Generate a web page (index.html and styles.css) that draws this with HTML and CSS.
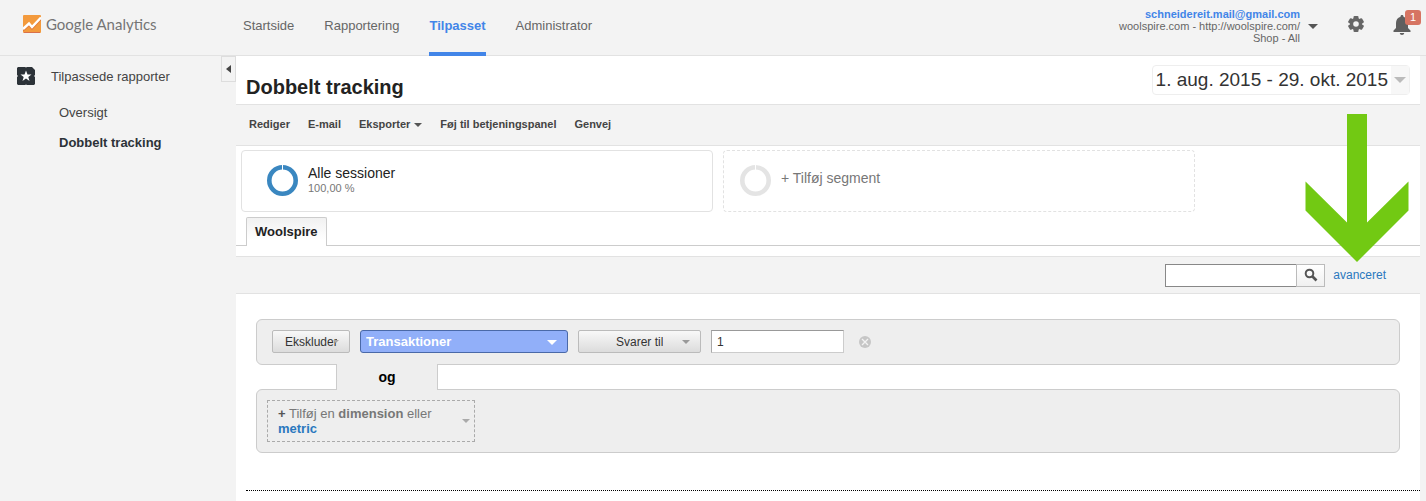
FILE: index.html
```html
<!DOCTYPE html>
<html lang="da">
<head>
	<meta charset="utf-8">
	<title>Dobbelt tracking - Google Analytics</title>
	<link rel="stylesheet" href="styles.css">
</head>
<body>
	<header class="header">
		<a class="logo" href="#">
			<svg width="18" height="18" viewBox="0 0 18 18">
				<rect width="18" height="18" rx="1" fill="#f39a3d"/>
				<path d="M1 17.500h16" stroke="#d9704a"/>
				<path d="M0 15.500l6-5.500 3 3.500L18 4" fill="none" stroke="#e07a3c" stroke-width="2"/>
				<path d="M0 14l6-5.500 3 3.500 9-9.500" fill="none" stroke="#fff" stroke-width="2.400"/>
			</svg>
			<span>Google Analytics</span>
		</a>
		<nav class="nav">
			<a href="#">Startside</a>
			<a href="#">Rapportering</a>
			<a href="#" class="active">Tilpasset</a>
			<a href="#">Administrator</a>
		</nav>
		<button class="account" type="button">
			<span class="account-text">
				<b>schneidereit.mail@gmail.com</b>
				<span>woolspire.com - http://woolspire.com/</span>
				<span>Shop - All</span>
			</span>
			<span class="caret caret-big"></span>
		</button>
		<button class="icon-btn" type="button" aria-label="Indstillinger">
			<svg width="16" height="16" viewBox="0 0 16 16">
				<g fill="#666">
					<rect x="5.500" y="0" width="5" height="16" rx="1"/>
					<rect x="5.500" y="0" width="5" height="16" rx="1" transform="rotate(60 8 8)"/>
					<rect x="5.500" y="0" width="5" height="16" rx="1" transform="rotate(120 8 8)"/>
					<circle cx="8" cy="8" r="6.200"/>
				</g>
				<circle cx="8" cy="8" r="2.800" fill="#f3f3f3"/>
			</svg>
		</button>
		<button class="icon-btn bell" type="button" aria-label="Meddelelser">
			<svg width="18" height="20" viewBox="0 0 18 20">
				<path d="M9 0c1 0 1.500.7 1.500 1.700C13.500 2.500 15 5 15 8v5l2.500 2.500V17H.5v-1.500L3 13V8c0-3 1.500-5.500 4.500-6.300C7.500.7 8 0 9 0zM6.800 18h4.400c0 1.200-1 2-2.200 2s-2.200-.8-2.200-2z" fill="#5f5f5f"/>
			</svg>
			<span class="badge">1</span>
		</button>
	</header>

	<div class="page">
		<aside class="sidebar">
			<a class="side-head" href="#">
				<svg width="18" height="18" viewBox="0 0 18 18">
					<path d="M1 0h7.500l.5 1 .5-1H15l3 3v5l-1 1 1 1v7l-1 1H9.500L9 17l-.5 1H1l-1-1v-7l1-1-1-1V1z" fill="#2c3238"/>
					<path d="M9 3.500l1.500 4h4l-3.200 2.400 1.200 4L9 11.500 5.500 13.900l1.200-4L3.500 7.500h4z" fill="#fff"/>
				</svg>
				<span>Tilpassede rapporter</span>
			</a>
			<a class="side-item" href="#">Oversigt</a>
			<a class="side-item active" href="#">Dobbelt tracking</a>
			<button class="collapse" type="button" aria-label="Skjul menu">
				<svg width="5" height="8" viewBox="0 0 5 8"><path d="M5 0v8L0 4z" fill="#444"/></svg>
			</button>
		</aside>

		<main class="main">
			<div class="title-row">
				<h1>Dobbelt tracking</h1>
				<button class="date" type="button">
					<span class="date-text">1. aug. 2015 - 29. okt. 2015</span>
					<span class="date-arrow"><span class="caret caret-date"></span></span>
				</button>
			</div>

			<div class="toolbar">
				<button type="button">Rediger</button>
				<button type="button">E-mail</button>
				<button type="button">Eksporter<span class="caret"></span></button>
				<button type="button">Føj til betjeningspanel</button>
				<button type="button">Genvej</button>
			</div>

			<div class="segments">
				<button class="segment" type="button">
					<svg width="32" height="32" viewBox="0 0 32 32">
						<circle cx="16.500" cy="16.500" r="13.200" fill="none" stroke="#3a87c0" stroke-width="4.600"/>
						<path d="M16.500 0v6" stroke="#fff"/>
					</svg>
					<span class="segment-text">
						<span class="segment-name">Alle sessioner</span>
						<span class="segment-pct">100,00 %</span>
					</span>
				</button>
				<button class="segment segment-add" type="button">
					<svg width="32" height="32" viewBox="0 0 32 32">
						<circle cx="16.500" cy="16.500" r="13.200" fill="none" stroke="#e4e4e4" stroke-width="4.600"/>
						<path d="M16.500 0v6" stroke="#fff"/>
					</svg>
					<span class="segment-text">+ Tilføj segment</span>
				</button>
			</div>

			<div class="tabs">
				<button class="tab" type="button">Woolspire</button>
			</div>

			<form class="search-row">
				<input class="search" type="text" aria-label="Søg">
				<button class="search-btn" type="button" aria-label="Søg">
					<svg width="14" height="14" viewBox="0 0 14 14">
						<circle cx="5.500" cy="5.500" r="3.800" fill="none" stroke="#555" stroke-width="2"/>
						<path d="M8.500 8.500l4 4" stroke="#555" stroke-width="2.600"/>
					</svg>
				</button>
				<a href="#">avanceret</a>
			</form>

			<form class="filter">
				<div class="panel">
					<span class="select select-mode">
						<select aria-label="Type"><option>Ekskluder</option><option>Medtag</option></select>
					</span>
					<span class="select select-metric">
						<select aria-label="Metric"><option>Transaktioner</option></select>
					</span>
					<span class="select select-match">
						<select aria-label="Betingelse"><option>Svarer til</option></select>
					</span>
					<input class="value" type="text" value="1" aria-label="Værdi">
					<button class="remove" type="button" aria-label="Fjern">
						<svg width="12" height="12" viewBox="0 0 12 12">
							<circle cx="6" cy="6" r="6" fill="#c6c6c6"/>
							<path d="M3 3l6 6M9 3L3 9" stroke="#f3f3f3" stroke-width="1.300"/>
						</svg>
					</button>
				</div>
				<div class="and">og</div>
				<div class="panel panel-add">
					<button class="add" type="button">
						<span><b class="plus">+</b> Tilføj en <b>dimension</b> eller <b class="metric">metric</b></span>
						<span class="caret caret-grey"></span>
					</button>
				</div>
			</form>

			<hr class="dots">

			<!-- arrow pointing at "avanceret" -->
			<svg class="pointer" width="104" height="148" viewBox="0 0 104 148">
				<path d="M42 0h20v108.500l41.500-41v29L52 148 .5 96.500v-29l41.500 41z" fill="#72c913"/>
			</svg>
		</main>
	</div>
</body>
</html>
```

FILE: styles.css
```css
* {
	box-sizing: border-box;
}
body {
	margin: 0;
	min-height: 100vh;
	display: flex;
	flex-direction: column;
	background: #f3f3f3;
	color: #222;
	font-family: "Liberation Sans", Arial, sans-serif;
	font-size: 13px;
}
a {
	color: inherit;
	text-decoration: none;
}
button {
	margin: 0;
	padding: 0;
	border: 0;
	background: none;
	color: inherit;
	font: inherit;
	text-align: left;
	cursor: pointer;
}
svg {
	display: block;
	flex: none;
}

/* little down arrows */
.caret {
	display: inline-block;
	border: 4px solid transparent;
	border-top-color: #555;
	border-bottom: 0;
}
.caret-big {
	border-width: 5px 5px 0;
}
.caret-date {
	border-width: 6px 6px 0;
	border-top-color: #bbb;
}
.caret-grey {
	border-top-color: #aaa;
}

/* header */
.header {
	display: flex;
	height: 56px;
	padding: 0 5px 0 23px;
	border-bottom: 1px solid #e2e2e2;
}
.logo {
	display: flex;
	gap: 5px;
	width: 220px;
	padding-top: 15px;
	color: #757575;
	font-family: Lato, sans-serif;
	font-size: 15px;
	line-height: 18px;
}
.nav {
	display: flex;
	gap: 30px;
	height: 56px;
	color: #666;
	line-height: 52px;
}
.nav a {
	border-bottom: 4px solid transparent;
}
.nav .active {
	border-color: #4285e8;
	color: #4285e8;
	font-weight: bold;
}
.account {
	display: flex;
	align-items: center;
	align-self: flex-start;
	gap: 8px;
	margin-left: auto;
	margin-right: 30px;
	padding-top: 8px;
	color: #666;
	font-size: 11px;
	line-height: 12px;
	text-align: right;
}
.account-text {
	display: flex;
	flex-direction: column;
}
.account-text b {
	color: #4285e8;
}
.icon-btn {
	display: flex;
	align-self: flex-start;
	padding-top: 16px;
}
.bell {
	position: relative;
	width: 28px;
	margin-left: 29px;
	padding-top: 15px;
}
.badge {
	position: absolute;
	top: 10px;
	right: 0;
	width: 16px;
	border-radius: 3px;
	background: #d67462;
	color: #fff;
	font-size: 11px;
	line-height: 15px;
	text-align: center;
}

/* layout */
.page {
	display: flex;
	flex: 1;
	padding-right: 6px;
}
.sidebar {
	position: relative;
	width: 236px;
	flex: none;
	color: #444;
}
.side-head {
	display: flex;
	align-items: center;
	gap: 16px;
	height: 40px;
	margin-bottom: 2px;
	padding-left: 17px;
}
.side-item {
	display: block;
	padding-left: 59px;
	line-height: 30px;
}
.side-item.active {
	color: #2c3238;
	font-weight: bold;
}
.collapse {
	position: absolute;
	top: 0;
	right: 0;
	display: flex;
	align-items: center;
	justify-content: center;
	width: 15px;
	height: 26px;
	border: 1px solid #ddd;
}
.main {
	position: relative;
	flex: 1;
	min-width: 0;
	background: #fff;
}

/* title and date */
.title-row {
	display: flex;
	align-items: center;
	justify-content: space-between;
	height: 48px;
	padding: 0 10px;
}
h1 {
	margin: 14px 0 0;
	font-size: 20px;
	line-height: 24px;
}
.date {
	display: flex;
	height: 30px;
	border: 1px solid #eee;
	border-radius: 4px;
	color: #333;
	font-size: 19px;
	line-height: 28px;
}
.date-text {
	padding: 0 3px;
}
.date-arrow {
	display: flex;
	align-items: center;
	justify-content: center;
	width: 18px;
	background: #f7f7f7;
}

/* toolbar */
.toolbar {
	display: flex;
	gap: 18px;
	padding: 0 13px 2px;
	border: 1px solid #e2e2e2;
	border-width: 1px 0;
	background: #f3f3f3;
	color: #444;
	font-size: 11px;
	font-weight: bold;
	line-height: 38px;
}
.toolbar .caret {
	margin-left: 4px;
	vertical-align: middle;
}

/* segments */
.segments {
	display: flex;
	gap: 10px;
	padding: 4px 5px 5px;
}
.segment {
	display: flex;
	align-items: center;
	gap: 10px;
	width: 472px;
	height: 62px;
	padding: 0 0 2px 24px;
	border: 1px solid #e2e2e2;
	border-radius: 4px;
}
.segment-add {
	padding-left: 15px;
	border-style: dashed;
	color: #777;
	font-size: 14px;
}
.segment-add .segment-text {
	padding-bottom: 4px;
}
.segment-text {
	display: flex;
	flex-direction: column;
}
.segment-name {
	font-size: 14px;
	line-height: 16px;
}
.segment-pct {
	color: #777;
	font-size: 11px;
	line-height: 14px;
}

/* tabs */
.tabs {
	padding-left: 10px;
	height: 29px;
	border-bottom: 1px solid #ccc;
}
.tab {
	height: 29px;
	padding: 0 8px 2px;
	border: 1px solid #ccc;
	border-bottom: 0;
	border-radius: 2px 2px 0 0;
	background: linear-gradient(#f1f1f1, #fff 80%);
	font-weight: bold;
}

/* search */
.search-row {
	display: flex;
	align-items: center;
	justify-content: flex-end;
	height: 38px;
	margin-top: 10px;
	padding-right: 34px;
	border: 1px solid #e2e2e2;
	border-width: 1px 0;
	background: #f3f3f3;
	color: #2a78be;
	font-size: 12px;
	line-height: 16px;
}
.search {
	width: 131px;
	height: 23px;
	padding: 0 4px;
	border: 1px solid #888;
	border-right: 0;
	background: #fff;
}
.search-btn {
	display: flex;
	align-items: center;
	justify-content: center;
	width: 29px;
	height: 23px;
	margin-right: 8px;
	border: 1px solid #bbb;
	background: linear-gradient(#fff, #f0f0f0);
}

/* filter */
.filter {
	padding: 25px 20px 0;
}
.panel {
	display: flex;
	align-items: center;
	gap: 10px;
	height: 46px;
	padding: 0 15px 1px;
	border: 1px solid #ccc;
	border-radius: 6px;
	background: #eee;
}
.panel-add {
	height: 64px;
	padding: 0 10px;
}
.select {
	position: relative;
	color: #333;
}
.select::after {
	content: "";
	position: absolute;
	top: 10px;
	right: 11px;
	border: 4px solid transparent;
	border-top-color: #999;
	border-bottom: 0;
	pointer-events: none;
}
select {
	display: block;
	appearance: none;
	width: 100%;
	height: 23px;
	margin: 0;
	padding: 0 12px;
	border: 1px solid #bbb;
	border-radius: 2px;
	background: linear-gradient(#f8f8f8, #dcdcdc);
	color: inherit;
	font: inherit;
	font-size: 12px;
}
.select-mode {
	width: 78px;
}
.select-mode::after {
	border-width: 3px 3px 0;
	border-top-color: #aaa;
}
.select-metric {
	width: 208px;
}
.select-match {
	width: 123px;
}
.select-metric select {
	padding: 0 5px;
	border-color: #4a69a8;
	border-radius: 3px;
	background: #91aff9;
	color: #fff;
	font-size: 13px;
	font-weight: bold;
}
.select-metric::after {
	border-width: 5px 5px 0;
	border-top-color: #fff;
}
.select-match select {
	padding: 0 37px;
}
.value {
	width: 133px;
	height: 23px;
	padding: 0 5px;
	border: 1px solid #ccc;
	border-top-color: #999;
	border-left-color: #aaa;
	color: #333;
	font: inherit;
	font-size: 12px;
}
.remove {
	margin-left: 5px;
}
/* joins the two panels, covers their borders */
.and {
	position: relative;
	width: 102px;
	margin: -1px 0 -1px 80px;
	border: 1px solid #ccc;
	border-width: 0 1px;
	background: #eee;
	color: #000;
	font-size: 14px;
	font-weight: bold;
	line-height: 26px;
	text-align: center;
}
.add {
	display: flex;
	align-items: center;
	width: 208px;
	height: 42px;
	padding: 0 4px 0 10px;
	border: 1px dashed #aaa;
	color: #777;
	line-height: 15px;
}
.add .caret {
	flex: none;
	margin-left: auto;
}
.plus {
	color: #555;
}
.metric {
	color: #2a78be;
}
.dots {
	margin: 37px 0 0 10px;
	border: 0;
	border-top: 1px dotted #000;
}
.pointer {
	position: absolute;
	top: 58px;
	right: 11px;
}
```
